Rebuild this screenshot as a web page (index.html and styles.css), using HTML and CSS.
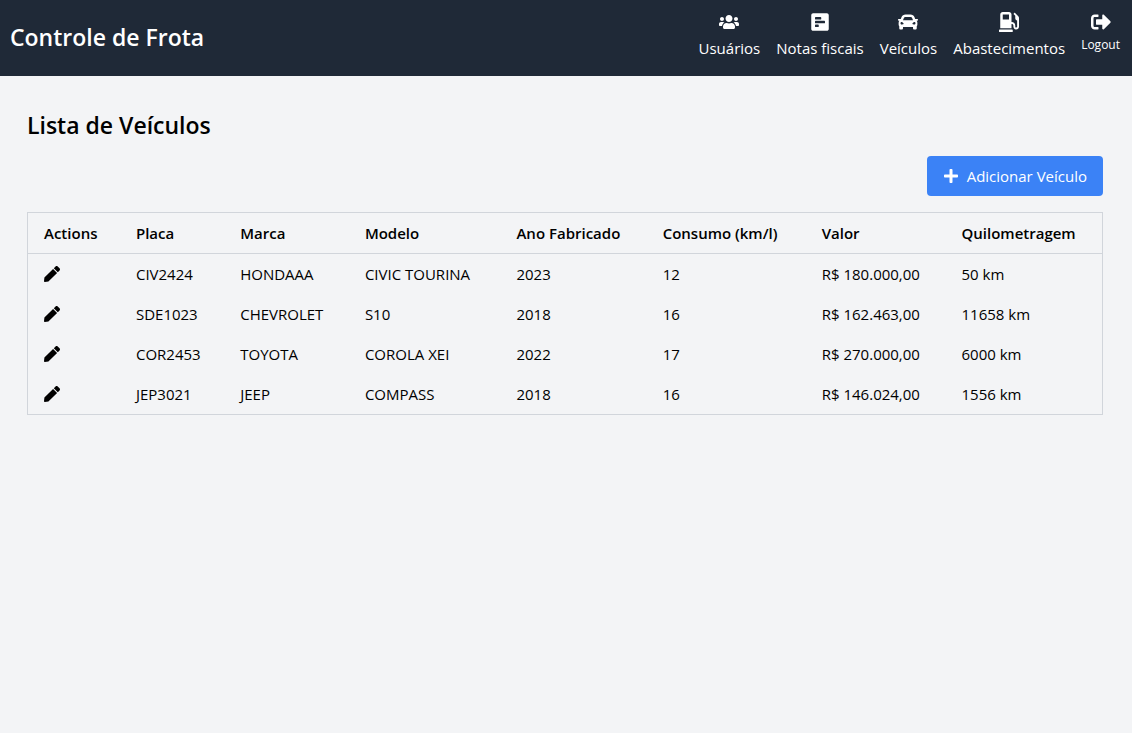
FILE: index.html
```html
<!DOCTYPE html>
<html lang="pt-BR">
<head>
<meta charset="utf-8">
<meta name="viewport" content="width=device-width, initial-scale=1">
<title>Controle de Frota</title>
<link rel="stylesheet" href="styles.css">
</head>
<body>
<svg class="sprite" aria-hidden="true">
  <symbol id="pen" viewBox="0 0 512 512"><path d="M290.74 93.24l128.02 128.02-277.99 277.99-114.14 12.6C11.35 513.54-1.56 500.62.14 485.34l12.7-114.22 277.9-277.88zm207.2-19.06l-60.11-60.11c-18.75-18.75-49.16-18.75-67.91 0l-56.55 56.55 128.02 128.02 56.55-56.55c18.75-18.76 18.75-49.16 0-67.91z"/></symbol>
</svg>
<header class="topbar">
  <h1 class="brand">Controle de Frota</h1>
  <nav class="nav">
    <a class="nav-item" href="#usuarios">
      <svg class="nav-icon" viewBox="0 0 640 512" aria-hidden="true"><path d="M96 224c35.3 0 64-28.7 64-64s-28.7-64-64-64-64 28.7-64 64 28.7 64 64 64zm448 0c35.3 0 64-28.7 64-64s-28.7-64-64-64-64 28.7-64 64 28.7 64 64 64zm32 32h-64c-17.6 0-33.5 7.1-45.1 18.6 40.3 22.1 68.9 62 75.1 109.4h66c17.7 0 32-14.3 32-32v-32c0-35.3-28.7-64-64-64zm-256 0c61.9 0 112-50.1 112-112S381.9 32 320 32 208 82.1 208 144s50.1 112 112 112zm76.8 32h-8.3c-20.8 10-43.9 16-68.5 16s-47.6-6-68.5-16h-8.3C179.6 288 128 339.6 128 403.2V432c0 26.5 21.5 48 48 48h288c26.5 0 48-21.5 48-48v-28.8c0-63.6-51.6-115.2-115.2-115.2zm-223.7-13.4C161.5 263.1 145.6 256 128 256H64c-35.3 0-64 28.7-64 64v32c0 17.7 14.3 32 32 32h65.9c6.3-47.4 34.9-87.3 75.2-109.4z"/></svg>
      <span>Usuários</span>
    </a>
    <a class="nav-item" href="#notas">
      <svg class="nav-icon" viewBox="0 0 448 512" aria-hidden="true"><path fill-rule="evenodd" d="M448 432V80c0-26.5-21.5-48-48-48H48C21.5 32 0 53.5 0 80v352c0 26.5 21.5 48 48 48h352c26.5 0 48-21.5 48-48zM112 192c-8.84 0-16-7.16-16-16v-32c0-8.84 7.16-16 16-16h128c8.84 0 16 7.16 16 16v32c0 8.84-7.16 16-16 16H112zm0 96c-8.84 0-16-7.16-16-16v-32c0-8.84 7.16-16 16-16h224c8.84 0 16 7.16 16 16v32c0 8.84-7.16 16-16 16H112zm0 96c-8.84 0-16-7.16-16-16v-32c0-8.84 7.16-16 16-16h64c8.84 0 16 7.16 16 16v32c0 8.84-7.16 16-16 16h-64z"/></svg>
      <span>Notas fiscais</span>
    </a>
    <a class="nav-item" href="#veiculos">
      <svg class="nav-icon" viewBox="0 0 512 512" aria-hidden="true"><path fill-rule="evenodd" d="M499.99 176h-59.87l-16.64-41.6C406.38 91.63 365.57 64 319.5 64h-127c-46.06 0-86.88 27.63-103.99 70.4L71.87 176H12.01C4.2 176-1.53 183.34.37 190.91l6 24C7.7 220.25 12.5 224 18.01 224h20.07C24.65 235.73 16 252.78 16 272v48c0 16.12 6.16 30.67 16 41.93V416c0 17.67 14.33 32 32 32h32c17.67 0 32-14.33 32-32v-32h256v32c0 17.67 14.33 32 32 32h32c17.67 0 32-14.33 32-32v-54.07c9.84-11.25 16-25.8 16-41.93v-48c0-19.22-8.65-36.27-22.07-48H494c5.51 0 10.31-3.75 11.64-9.09l6-24c1.89-7.57-3.84-14.91-11.65-14.91zm-352.06-17.83c7.29-18.22 24.94-30.17 44.57-30.17h127c19.63 0 37.28 11.95 44.57 30.17L384 208H128l19.93-49.83zM96 319.8c-19.2 0-32-12.76-32-31.9S76.8 256 96 256s48 28.71 48 47.85-28.8 15.95-48 15.95zm320 0c-19.2 0-48 3.19-48-15.95S396.8 256 416 256s32 12.76 32 31.9-12.8 31.9-32 31.9z"/></svg>
      <span>Veículos</span>
    </a>
    <a class="nav-item" href="#abastecimentos">
      <svg class="nav-icon" viewBox="0 0 512 512" aria-hidden="true"><path fill-rule="evenodd" d="M336 448H16c-8.8 0-16 7.2-16 16v32c0 8.8 7.2 16 16 16h320c8.8 0 16-7.2 16-16v-32c0-8.8-7.2-16-16-16zm157.2-340.7l-81-81c-6.2-6.2-16.4-6.2-22.6 0l-11.3 11.3c-6.2 6.2-6.2 16.4 0 22.6L416 97.9V160c0 28.1 20.9 51.3 48 55.2V376c0 13.2-10.8 24-24 24s-24-10.8-24-24v-32c0-48.6-39.4-88-88-88h-8V64c0-35.3-28.7-64-64-64H96C60.7 0 32 28.7 32 64v352h288V304h8c22.1 0 40 17.9 40 40v27.8c0 37.7 27 72 64.5 75.9 43 4.3 79.5-29.5 79.5-71.7V152.6c0-17-6.8-33.3-18.8-45.3zM256 192H96V64h160v128z"/></svg>
      <span>Abastecimentos</span>
    </a>
    <button class="nav-item logout" type="button">
      <svg class="nav-icon" viewBox="0 0 512 512" aria-hidden="true"><path d="M497 273L329 441c-15 15-41 4.5-41-17v-96H152c-13.3 0-24-10.7-24-24v-96c0-13.3 10.7-24 24-24h136V88c0-21.4 25.9-32 41-17l168 168c9.3 9.4 9.3 24.6 0 34zM192 436v-40c0-6.6-5.4-12-12-12H96c-17.7 0-32-14.3-32-32V160c0-17.7 14.3-32 32-32h84c6.6 0 12-5.4 12-12V76c0-6.6-5.4-12-12-12H96c-53 0-96 43-96 96v192c0 53 43 96 96 96h84c6.6 0 12-5.4 12-12z"/></svg>
      <span>Logout</span>
    </button>
  </nav>
</header>
<main class="page">
  <h2 class="title">Lista de Veículos</h2>
  <div class="toolbar">
    <button class="add" type="button">
      <svg class="add-icon" viewBox="0 0 448 512" aria-hidden="true"><path d="M416 208H272V64c0-17.67-14.33-32-32-32h-32c-17.67 0-32 14.33-32 32v144H32c-17.67 0-32 14.33-32 32v32c0 17.67 14.33 32 32 32h144v144c0 17.67 14.33 32 32 32h32c17.67 0 32-14.33 32-32V304h144c17.67 0 32-14.33 32-32v-32c0-17.67-14.33-32-32-32z"/></svg>
      <span>Adicionar Veículo</span>
    </button>
  </div>
  <table class="table">
    <colgroup>
      <col class="c-actions"><col class="c-placa"><col class="c-marca"><col class="c-modelo"><col class="c-ano"><col class="c-consumo"><col class="c-valor"><col>
    </colgroup>
    <thead>
      <tr><th>Actions</th><th>Placa</th><th>Marca</th><th>Modelo</th><th>Ano Fabricado</th><th>Consumo (km/l)</th><th>Valor</th><th>Quilometragem</th></tr>
    </thead>
    <tbody>
      <tr><td><button class="edit" type="button" aria-label="Editar CIV2424"><svg class="edit-icon"><use href="#pen"/></svg></button></td><td>CIV2424</td><td>HONDAAA</td><td>CIVIC TOURINA</td><td>2023</td><td>12</td><td>R$ 180.000,00</td><td>50 km</td></tr>
      <tr><td><button class="edit" type="button" aria-label="Editar SDE1023"><svg class="edit-icon"><use href="#pen"/></svg></button></td><td>SDE1023</td><td>CHEVROLET</td><td>S10</td><td>2018</td><td>16</td><td>R$ 162.463,00</td><td>11658 km</td></tr>
      <tr><td><button class="edit" type="button" aria-label="Editar COR2453"><svg class="edit-icon"><use href="#pen"/></svg></button></td><td>COR2453</td><td>TOYOTA</td><td>COROLA XEI</td><td>2022</td><td>17</td><td>R$ 270.000,00</td><td>6000 km</td></tr>
      <tr><td><button class="edit" type="button" aria-label="Editar JEP3021"><svg class="edit-icon"><use href="#pen"/></svg></button></td><td>JEP3021</td><td>JEEP</td><td>COMPASS</td><td>2018</td><td>16</td><td>R$ 146.024,00</td><td>1556 km</td></tr>
    </tbody>
  </table>
</main>
</body>
</html>
```
FILE: styles.css
```css
* {
  box-sizing: border-box;
}

body {
  margin: 0;
  min-height: 100vh;
  background: #f3f4f6;
  color: #000;
  font-family: "Segoe UI", "Open Sans", "Noto Sans", sans-serif;
  font-size: 15px;
  line-height: 24px;
}

button {
  padding: 0;
  border: 0;
  background: none;
  color: inherit;
  font: inherit;
  cursor: pointer;
}

svg {
  display: block;
  fill: currentColor;
}

.sprite {
  display: none;
}

.topbar {
  display: flex;
  align-items: center;
  justify-content: space-between;
  padding: 12px 12px 12px 10px;
  background: #1f2937;
  color: #fff;
}

.brand,
.title {
  margin: 0;
  padding-bottom: 2px;
  font-size: 23px;
  font-weight: 600;
  line-height: 30px;
}

.nav {
  display: flex;
  gap: 16px;
}

.nav-item {
  display: flex;
  flex-direction: column;
  align-items: center;
  justify-content: flex-start;
  gap: 4px;
  padding-bottom: 4px;
  color: inherit;
  text-decoration: none;
}

.nav-icon {
  width: 20px;
  height: 20px;
}

.logout {
  font-size: 12px;
  line-height: 18px;
}

.page {
  padding: 34px 29px 34px 27px;
}

.toolbar {
  display: flex;
  justify-content: flex-end;
  padding: 14px 0 16px;
}

.add {
  display: flex;
  align-items: center;
  gap: 8px;
  padding: 8px 16px;
  border-radius: 4px;
  background: #3b82f6;
  color: #fff;
}

.add-icon {
  width: 16px;
  height: 16px;
}

.table {
  width: 100%;
  border: 1px solid #d1d5db;
  border-collapse: collapse;
  table-layout: fixed;
}

.table th,
.table td {
  padding: 8px 16px;
  text-align: left;
  white-space: nowrap;
}

.table th {
  font-weight: 600;
}

.table thead tr {
  border-bottom: 1px solid #d1d5db;
}

.edit {
  display: block;
}

.edit-icon {
  width: 16px;
  height: 16px;
}

.c-actions { width: 8.6%; }
.c-placa { width: 9.7%; }
.c-marca { width: 11.6%; }
.c-modelo { width: 14.1%; }
.c-ano { width: 13.6%; }
.c-consumo { width: 14.8%; }
.c-valor { width: 13%; }
```
